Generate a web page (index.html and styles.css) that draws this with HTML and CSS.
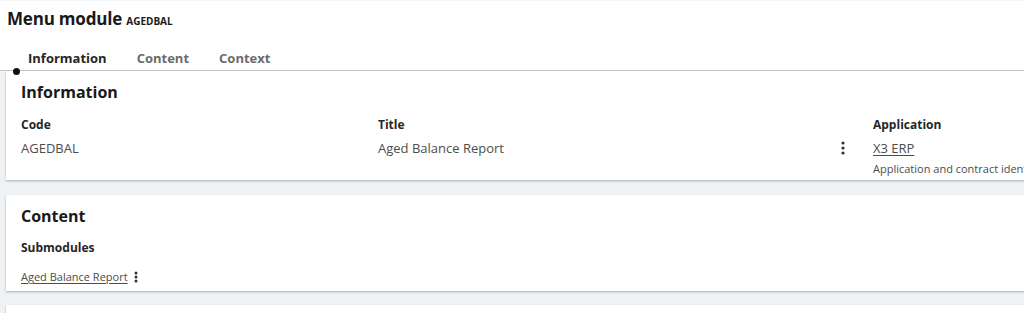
FILE: index.html
```html
<!DOCTYPE html>
<html lang="en">
<head>
<meta charset="utf-8">
<title>Menu module AGEDBAL</title>
<link rel="stylesheet" href="styles.css">
</head>
<body>
<div class="page">
  <header class="header">
    <h1 class="page-title">Menu module <span class="page-code">AGEDBAL</span></h1>
    <nav class="tabs">
      <span class="tab tab-active">Information</span>
      <span class="tab">Content</span>
      <span class="tab">Context</span>
    </nav>
  </header>
  <main class="content">
    <span class="marker"></span>
    <section class="card card-info">
      <h2 class="card-title">Information</h2>
      <div class="fields">
        <div class="field">
          <div class="label">Code</div>
          <div class="value">AGEDBAL</div>
        </div>
        <div class="field field-title">
          <div class="label">Title</div>
          <div class="value value-row"><span>Aged Balance Report</span>
            <svg class="kebab kebab-title" width="4" height="14" viewBox="0 0 4 14"><circle cx="2" cy="2" r="1.6"/><circle cx="2" cy="7" r="1.6"/><circle cx="2" cy="12" r="1.6"/></svg>
          </div>
        </div>
        <div class="field">
          <div class="label">Application</div>
          <div class="value"><a class="link" href="#">X3 ERP</a></div>
          <div class="helper">Application and contract identifier</div>
        </div>
      </div>
    </section>
    <section class="card card-content">
      <h2 class="card-title">Content</h2>
      <div class="label label-sub">Submodules</div>
      <div class="sub-row">
        <a class="link link-small" href="#">Aged Balance Report</a>
        <svg class="kebab" width="4" height="12" viewBox="0 0 4 12"><circle cx="2" cy="2" r="1.5"/><circle cx="2" cy="6" r="1.5"/><circle cx="2" cy="10" r="1.5"/></svg>
      </div>
    </section>
    <section class="card card-empty"></section>
  </main>
</div>
</body>
</html>
```
FILE: styles.css
```css
* { box-sizing: border-box; }
html, body {
  margin: 0;
  padding: 0;
  width: 1024px;
  height: 313px;
  overflow: hidden;
  background: #ffffff;
  font-family: "Open Sans", "Liberation Sans", sans-serif;
  color: #191919;
}
.page { position: relative; }
.header {
  background: #ffffff;
  border-top: 1px solid #f2f7f8;
}
.page-title {
  margin: 6px 0 0 7px;
  font-size: 17px;
  line-height: 24px;
  font-weight: 700;
  color: #191919;
  letter-spacing: -0.2px;
}
.page-code {
  font-size: 10px;
  font-weight: 700;
  letter-spacing: 0;
}
.tabs {
  display: flex;
  margin-top: 13px;
  padding-left: 28px;
  gap: 30px;
}
.tab {
  font-size: 13px;
  line-height: 24px;
  font-weight: 700;
  color: #6b6b6b;
}
.tab-active { color: #262626; }
.content {
  position: relative;
  background: #eff2f4;
  border-top: 1px solid #c4c6c8;
  padding: 0 0 40px 6px;
}
.marker {
  position: absolute;
  left: 13px;
  top: -3px;
  width: 7px;
  height: 7px;
  border-radius: 50%;
  background: #111111;
}
.card {
  width: 1200px;
  background: #ffffff;
  box-shadow: 0 1px 2px rgba(0, 0, 0, 0.28);
  padding: 10px 15px 4px 15px;
}
.card-title {
  margin: 0;
  font-size: 16px;
  line-height: 22px;
  font-weight: 700;
  color: #191919;
}
.fields {
  display: grid;
  grid-template-columns: 357px 495px 1fr;
  margin-top: 13px;
}
.label {
  font-size: 12px;
  line-height: 18px;
  font-weight: 700;
  color: #262626;
}
.value {
  margin-top: 4px;
  font-size: 13px;
  line-height: 20px;
  color: #4d4d4d;
}
.value-row {
  display: flex;
  align-items: center;
  justify-content: space-between;
  padding-right: 28px;
}
.kebab { fill: #333333; display: block; }
.helper {
  margin-top: 4px;
  font-size: 11px;
  line-height: 14px;
  color: #4d4d4d;
  white-space: nowrap;
}
.link {
  color: #4d4d4d;
  text-decoration: underline;
  text-underline-offset: 2px;
}
.card-content {
  margin-top: 15px;
  padding-bottom: 5px;
}
.label-sub { margin-top: 12px; }
.sub-row {
  display: flex;
  align-items: center;
  gap: 6px;
  margin-top: 11px;
  height: 18px;
}
.link-small {
  font-size: 11px;
  line-height: 18px;
}
.card-empty {
  margin-top: 14px;
  height: 40px;
}
```
